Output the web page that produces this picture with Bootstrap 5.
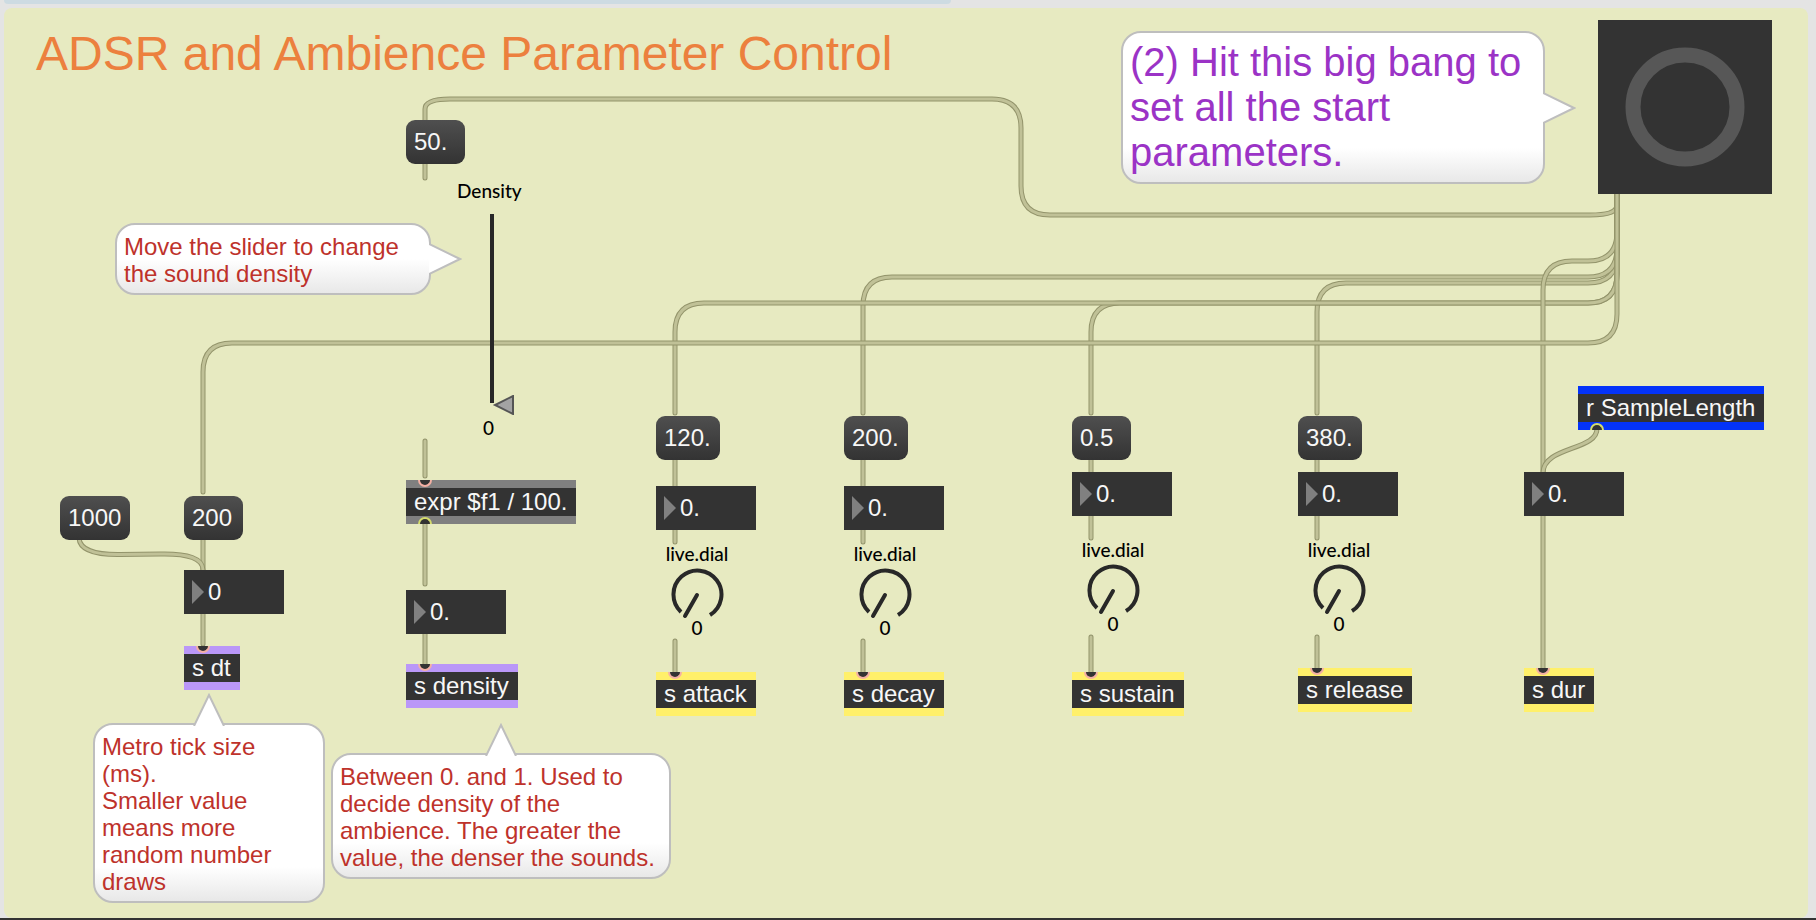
<!DOCTYPE html>
<html lang="en">
<head>
<meta charset="utf-8">
<meta name="viewport" content="width=device-width, initial-scale=1">
<title>ADSR and Ambience Parameter Control</title>
<link href="https://cdn.jsdelivr.net/npm/bootstrap@5.3.0/dist/css/bootstrap.min.css" rel="stylesheet">
<style>
  :root { --ink: #333333; --paper: #e7eac1; --text: #f7f7f7; }
  body { background: #e4e4e4; font-family: "Liberation Sans", Arial, sans-serif; font-size: 24px; overflow-x: hidden; }
  .shell { border-bottom: 2px solid var(--ink); }
  .upper-panel { height: 4px; width: 947px; max-width: 100%; background: #cddbe2; border-radius: 0 0 6px 6px; }
  .patcher { background: var(--paper); border-radius: 8px; margin: 4px 8px 0 4px; min-height: 910px; }
  .canvas { position: absolute; left: -4px; top: -8px; width: 100%; height: 100%; }
  .cords { position: absolute; left: 0; top: 0; width: 1808px; height: 910px; pointer-events: none; }
  .cord-edge { fill: none; stroke: #93946b; stroke-width: 5; stroke-linecap: round; }
  .cord-core { fill: none; stroke: #c0c197; stroke-width: 3; stroke-linecap: round; }
  .node { position: absolute; margin: 0; }
  .patch-title { font-size: 48px; line-height: 56px; font-weight: 400; color: #ec803e; white-space: nowrap; }

  .msg { height: 44px; padding: 0 8px; border: 0; border-radius: 9px; line-height: 44px; font-size: 24px; text-align: left; color: var(--text); background: linear-gradient(#4f4f4f, #333); }
  .msg:hover { color: #fff; background: #555; }
  .w-s { width: 59px; } .w-m { width: 64px; } .w-l { width: 70px; }

  .numbox { width: 100px; height: 44px; }
  .numbox input { display: block; width: 100%; height: 44px; border: 0; border-radius: 0; padding: 0 4px 0 24px; line-height: 44px; background: var(--ink); color: var(--text); font-size: 24px; }
  .numbox::before { content: ""; position: absolute; left: 8px; top: 10px; border-left: 12px solid #808080; border-top: 12px solid transparent; border-bottom: 12px solid transparent; }

  .obj { height: 44px; padding: 0 9px 0 8px; line-height: 28px; color: var(--text); background: var(--ink); border: 0 solid #808080; border-width: 8px 0; white-space: nowrap; }
  .obj-violet { border-color: #ba97f8; }
  .obj-yellow { border-color: #fff06a; }
  .obj-blue { border-color: #0433f8; }
  .inlet::before, .outlet::after { content: ""; position: absolute; left: 12px; width: 14px; height: 7px; background: var(--ink); border: 2px solid #f4b0a4; }
  .inlet::before { top: -8px; border-top: 0; border-radius: 0 0 7px 7px; }
  .outlet::after { bottom: -8px; border-color: #d5dc6c; border-bottom: 0; border-radius: 7px 7px 0 0; }

  .note { padding: 8px 6px 6px 7px; border: 2px solid #bebebe; border-radius: 20px; line-height: 27px; color: #be322b; background: linear-gradient(#fff 0, #fff calc(100% - 34px), #e8e8e8 100%); white-space: nowrap; }
  .note svg { position: absolute; fill: #fff; stroke: #bebebe; stroke-width: 2; }
  .note .tip-up { top: -32px; width: 34px; height: 33px; }
  .note .tip-right { right: -33px; width: 33px; height: 34px; }
  .note-slider { width: 316px; } .note-slider .tip-right { top: 17px; }
  .note-tick { width: 232px; } .note-tick .tip-up { left: 97px; }
  .note-density { width: 340px; } .note-density .tip-up { left: 151px; }
  .note-bang { width: 424px; padding-bottom: 7px; padding-top: 7px; font-size: 40px; line-height: 45px; color: #9b33c6; }
  .note-bang .tip-right { top: 58px; }

  .bang { width: 174px; height: 174px; border: 0; background: var(--ink); }
  .dial, .fader-name, .fader-value { font-family: Lato, "Open Sans", sans-serif; font-size: 19px; line-height: 24px; font-weight: 500; color: #000; text-align: center; }
  .dial { width: 82px; }
  .dial svg { width: 54px; height: 52px; margin: 2px auto -4px; }
  .fader { appearance: none; -webkit-appearance: none; width: 201px; height: 25px; transform-origin: 0 0; transform: rotate(-90deg); background: linear-gradient(#282828, #282828) 12px 0 / 189px 4px no-repeat; }
  .fader::-webkit-slider-thumb { -webkit-appearance: none; width: 20px; height: 25px; background: url("data:image/svg+xml,%3Csvg xmlns='http://www.w3.org/2000/svg' width='20' height='25'%3E%3Cpath d='M1 23H19L10 5z' fill='%23a3a3a3' stroke='%23555' stroke-width='2'/%3E%3C/svg%3E"); }
</style>
</head>
<body>
<div class="shell">
  <div class="upper-panel ms-1"></div>
  <main class="patcher position-relative">
    <div class="canvas">

      <svg class="cords" aria-hidden="true">
        <defs>
          <path id="c1" d="M1617 190V205Q1617 215 1590 215H1050Q1021 215 1021 186V128Q1021 99 992 99H450Q425 99 425 109V122"/>
          <path id="c2" d="M1617 190V254Q1617 283 1588 283H1346Q1317 283 1317 312V413"/>
          <path id="c3" d="M1617 190V248Q1617 277 1588 277H892Q863 277 863 306V413"/>
          <path id="c4" d="M1617 190V274Q1617 303 1588 303H1120Q1091 303 1091 332V413"/>
          <path id="c5" d="M1617 190V274Q1617 303 1588 303H704Q675 303 675 332V413"/>
          <path id="c6" d="M1617 190V232Q1617 261 1588 261H1572Q1543 261 1543 290V474"/>
          <path id="c7" d="M1617 190V314Q1617 343 1588 343H232Q203 343 203 372V492"/>
          <path id="c8" d="M425 160V178M425 441V476M425 520V584M425 630V666M203 536V572M203 612V644"/>
          <path id="c9" d="M675 456V488M675 526V542M675 641V674M863 456V488M863 526V542M863 641V674"/>
          <path id="c10" d="M1091 456V474M1091 512V538M1091 637V674M1317 456V474M1317 512V538M1317 637V670M1543 512V670"/>
          <path id="c11" d="M79 538Q80 555 120 554.500L160 554Q203 553 203 570"/>
          <path id="c12" d="M1597 428C1598 451 1543 446 1543 473"/>
          <g id="knob" fill="none" stroke="#282828" stroke-width="4">
            <path d="M11 44A24 24 0 1 1 40 47"/>
            <path d="M27 27L15 48" stroke-linecap="round"/>
          </g>
        </defs>
        <g id="cord-list"></g>
      </svg>

      <h1 class="node patch-title" style="left:36px;top:26px">ADSR and Ambience Parameter Control</h1>

      <div class="node note note-bang" style="left:1121px;top:31px">(2) Hit this big bang to<br>set all the start<br>parameters.
        <svg class="tip-right" viewBox="0 0 33 34"><path d="M0 2L31 17L0 32"/></svg></div>
      <button class="node bang p-0" style="left:1598px;top:20px" aria-label="Set all start parameters">
        <svg class="d-block" width="174" height="174"><circle cx="87" cy="87" r="52" fill="none" stroke="#575757" stroke-width="15"/></svg>
      </button>

      <!-- Density column -->
      <button class="node msg w-s" style="left:406px;top:120px">50.</button>
      <label class="node fader-name" for="density" style="left:457px;top:179px">Density</label>
      <input class="node fader" id="density" type="range" min="0" max="100" value="0" style="left:490px;top:415px">
      <output class="node fader-value" for="density" style="left:483px;top:416px">0</output>
      <div class="node note note-slider" style="left:115px;top:223px">Move the slider to change<br>the sound density
        <svg class="tip-right" viewBox="0 0 33 34"><path d="M0 2L31 17L0 32"/></svg></div>
      <div class="node obj inlet outlet" style="left:406px;top:480px">expr $f1 / 100.</div>
      <div class="node numbox" style="left:406px;top:590px"><input type="text" value="0." aria-label="Density value"></div>
      <div class="node obj obj-violet inlet" style="left:406px;top:664px">s density</div>
      <div class="node note note-density" style="left:331px;top:753px">Between 0. and 1. Used to<br>decide density of the<br>ambience. The greater the<br>value, the denser the sounds.
        <svg class="tip-up" viewBox="0 0 34 33"><path d="M2 33L17 2L32 33"/></svg></div>

      <!-- Tick size column -->
      <button class="node msg w-l" style="left:60px;top:496px">1000</button>
      <button class="node msg w-s" style="left:184px;top:496px">200</button>
      <div class="node numbox" style="left:184px;top:570px"><input type="text" value="0" aria-label="Tick size"></div>
      <div class="node obj obj-violet inlet" style="left:184px;top:646px">s dt</div>
      <div class="node note note-tick" style="left:93px;top:723px">Metro tick size<br>(ms).<br>Smaller value<br>means more<br>random number<br>draws
        <svg class="tip-up" viewBox="0 0 34 33"><path d="M2 33L17 2L32 33"/></svg></div>

      <!-- Attack -->
      <button class="node msg w-m" style="left:656px;top:416px">120.</button>
      <div class="node numbox" style="left:656px;top:486px"><input type="text" value="0." aria-label="Attack"></div>
      <div class="node dial" style="left:656px;top:542px">live.dial<svg class="d-block" viewBox="0 0 54 52"><use href="#knob"/></svg>0</div>
      <div class="node obj obj-yellow inlet" style="left:656px;top:672px">s attack</div>

      <!-- Decay -->
      <button class="node msg w-m" style="left:844px;top:416px">200.</button>
      <div class="node numbox" style="left:844px;top:486px"><input type="text" value="0." aria-label="Decay"></div>
      <div class="node dial" style="left:844px;top:542px">live.dial<svg class="d-block" viewBox="0 0 54 52"><use href="#knob"/></svg>0</div>
      <div class="node obj obj-yellow inlet" style="left:844px;top:672px">s decay</div>

      <!-- Sustain -->
      <button class="node msg w-s" style="left:1072px;top:416px">0.5</button>
      <div class="node numbox" style="left:1072px;top:472px"><input type="text" value="0." aria-label="Sustain"></div>
      <div class="node dial" style="left:1072px;top:538px">live.dial<svg class="d-block" viewBox="0 0 54 52"><use href="#knob"/></svg>0</div>
      <div class="node obj obj-yellow inlet" style="left:1072px;top:672px">s sustain</div>

      <!-- Release -->
      <button class="node msg w-m" style="left:1298px;top:416px">380.</button>
      <div class="node numbox" style="left:1298px;top:472px"><input type="text" value="0." aria-label="Release"></div>
      <div class="node dial" style="left:1298px;top:538px">live.dial<svg class="d-block" viewBox="0 0 54 52"><use href="#knob"/></svg>0</div>
      <div class="node obj obj-yellow inlet" style="left:1298px;top:668px">s release</div>

      <!-- Duration -->
      <div class="node obj obj-blue outlet" style="left:1578px;top:386px">r SampleLength</div>
      <div class="node numbox" style="left:1524px;top:472px"><input type="text" value="0." aria-label="Duration"></div>
      <div class="node obj obj-yellow inlet" style="left:1524px;top:668px">s dur</div>
    </div>
  </main>
</div>

<script src="https://cdn.jsdelivr.net/npm/bootstrap@5.3.0/dist/js/bootstrap.bundle.min.js"></script>
<script>
  // Each cord is stroked twice: a dark casing, then a lighter core.
  const list = document.getElementById('cord-list');
  for (let i = 1; i <= 12; i++) {
    for (const layer of ['cord-edge', 'cord-core']) {
      const use = document.createElementNS('http://www.w3.org/2000/svg', 'use');
      use.setAttribute('href', '#c' + i);
      use.setAttribute('class', layer);
      list.appendChild(use);
    }
  }
</script>
</body>
</html>
